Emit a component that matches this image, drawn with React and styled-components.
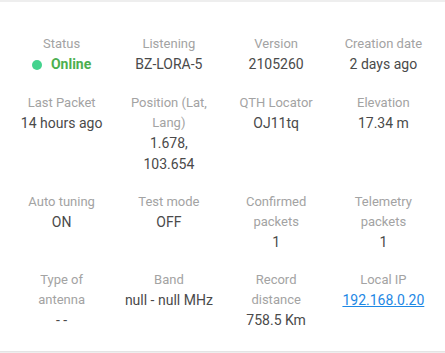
import React from "react";
import styled, { createGlobalStyle } from "styled-components";

const GlobalStyle = createGlobalStyle`
  html, body {
    margin: 0;
    padding: 0;
    background: #eeeeee;
    font-family: Roboto, "Noto Sans", Arial, sans-serif;
  }
`;

const Card = styled.section`
  margin-top: 2px;
  height: 350px;
  box-sizing: border-box;
  background: #fff;
  border-bottom: 1px solid #e4e4e4;
  padding: 32px 8px 0;
`;

const Grid = styled.div`
  display: grid;
  grid-template-columns: repeat(4, 1fr);
  row-gap: 17px;
`;

const Item = styled.div`
  display: flex;
  flex-direction: column;
  align-items: center;
  text-align: center;
`;

const Label = styled.div`
  max-width: 86px;
  font-size: 13px;
  line-height: 20px;
  color: #a3a3a3;
`;

const Value = styled.div`
  max-width: 92px;
  font-size: 14px;
  font-weight: 400;
  line-height: 21px;
  color: #4a4a4a;
`;

const Status = styled.span`
  display: inline-flex;
  align-items: center;
  gap: 9px;
  font-weight: 700;
  line-height: 21px;
  color: #4caf50;
`;

const Dot = styled.span`
  width: 10px;
  height: 10px;
  border-radius: 50%;
  background: #44d38e;
`;

const Link = styled.a`
  color: #1e88e5;
  text-decoration: underline;
`;

const rows = [
  ["Status", <Status><Dot />Online</Status>],
  ["Listening", "BZ-LORA-5"],
  ["Version", "2105260"],
  ["Creation date", "2 days ago"],
  ["Last Packet", "14 hours ago"],
  ["Position (Lat, Lang)", "1.678, 103.654"],
  ["QTH Locator", "OJ11tq"],
  ["Elevation", "17.34 m"],
  ["Auto tuning", "ON"],
  ["Test mode", "OFF"],
  ["Confirmed packets", "1"],
  ["Telemetry packets", "1"],
  ["Type of antenna", "- -"],
  ["Band", "null - null MHz"],
  ["Record distance", "758.5 Km"],
  ["Local IP", <Link href="#">192.168.0.20</Link>]
];

export default function App() {
  return (
    <>
      <GlobalStyle />
      <Card>
        <Grid>
          {rows.map(([label, value]) => (
            <Item key={label}>
              <Label>{label}</Label>
              <Value>{value}</Value>
            </Item>
          ))}
        </Grid>
      </Card>
    </>
  );
}
